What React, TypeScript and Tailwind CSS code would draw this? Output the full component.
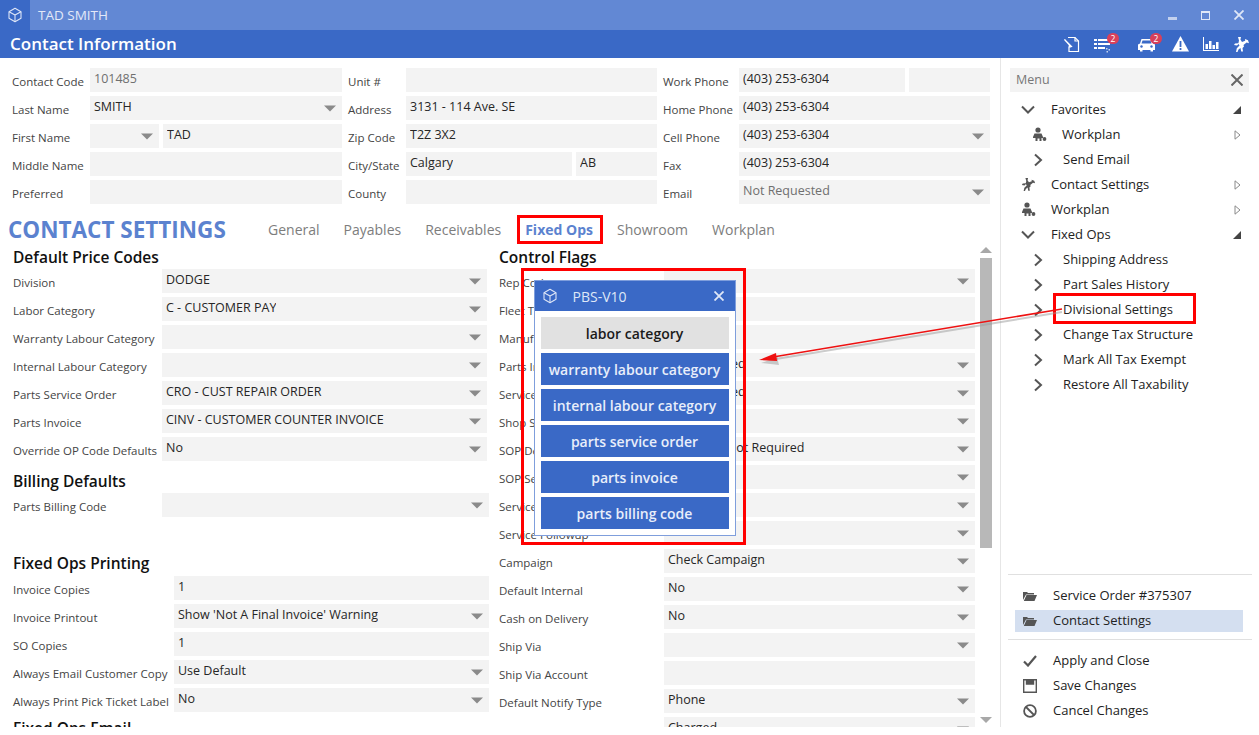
import React from "react";

const Caret = () => (
  <svg width="12" height="7" viewBox="0 0 12 7" className="shrink-0">
    <path d="M0 0.5h12L6 6.5z" fill="#8a8a8a" />
  </svg>
);

function Field({ value, select, muted, className = "" }: { value?: string; select?: boolean; muted?: boolean; className?: string }) {
  return (
    <div className={`h-6 bg-[#f3f3f3] flex items-start justify-between pl-[4px] pr-[6px] min-w-0 ${className}`}>
      <span className={`text-[12.5px] leading-[22px] whitespace-nowrap overflow-hidden ${muted ? "text-[#6f6f6f]" : "text-[#262626]"}`}>{value}</span>
      {select && <span className="mt-[9px]"><Caret /></span>}
    </div>
  );
}

function Row({ label, labelW, value, select, muted }: { label: string; labelW: string; value?: string; select?: boolean; muted?: boolean }) {
  return (
    <div className="flex items-center h-6">
      <div className={`${labelW} shrink-0 text-[11.5px] text-[#444444] whitespace-nowrap pt-[3px]`}>{label}</div>
      <Field value={value} select={select} muted={muted} className="flex-1" />
    </div>
  );
}

const Heading = ({ children, className = "" }: { children: React.ReactNode; className?: string }) => (
  <div className={`text-[15.5px] font-semibold text-[#111111] leading-6 h-6 ${className}`}>{children}</div>
);

const Cube = ({ size = 16, color = "#dfe7f7" }: { size?: number; color?: string }) => (
  <svg width={size} height={size} viewBox="0 0 24 24" fill="none" stroke={color} strokeWidth="1.6" strokeLinejoin="round">
    <path d="M12 2l9 5v10l-9 5-9-5V7z" />
    <path d="M3 7l9 5 9-5M12 12v10" />
  </svg>
);

const Badge = ({ className }: { className: string }) => (
  <span className={`absolute w-[12px] h-[11px] rounded-full bg-[#d8405a] text-white text-[8.5px] leading-[11px] text-center ${className}`}>2</span>
);

const ToolIcon = ({ color = "#ffffff", size = 17 }: { color?: string; size?: number }) => (
  <svg width={size} height={size} viewBox="0 0 17 17" fill={color}>
    <path d="M5 1h3l-.6 2.6L9 6l3.2-1.2L12 3l3 1.2 1 3-2.4-.6L10.500 9l.5 1.500L9.500 12l.5 3.500H8.200L7.500 12 5.500 13.500 4.500 16H3l.8-3.800L6.500 9.500 5.600 8 4 9.500 1 9l1-1.500 3.400-.3L6 4.500z" />
  </svg>
);

const PersonGear = () => (
  <svg width="15" height="15" viewBox="0 0 15 15" fill="#555555">
    <circle cx="6" cy="3" r="2.600" />
    <path d="M2.500 6.500h7l1.500 3.500v1H9.500V14h-2v-2.500H5.500V14h-2v-3H1v-1z" />
    <circle cx="12.500" cy="12" r="1.900" />
  </svg>
);

const ChevronRight = () => (
  <svg width="10" height="14" viewBox="0 0 10 14" fill="none" stroke="#555555" strokeWidth="2"><path d="M2 1.500L8 7l-6 5.500" /></svg>
);
const ChevronDown = () => (
  <svg width="14" height="10" viewBox="0 0 14 10" fill="none" stroke="#555555" strokeWidth="2"><path d="M1 1.500L7 7.500l6-6" /></svg>
);
const TriOpen = () => (
  <svg width="8" height="8" viewBox="0 0 8 8"><path d="M8 0v8H0z" fill="#444444" /></svg>
);
const TriClosed = () => (
  <svg width="7" height="10" viewBox="0 0 7 10" fill="none" stroke="#8a8a8a" strokeWidth="1"><path d="M1 .8L6 5 1 9.200z" /></svg>
);

function MenuItem({ level, icon, label, tri }: { level: 1 | 2; icon: React.ReactNode; label: string; tri?: "open" | "closed" }) {
  return (
    <div className="h-[25px] flex items-center text-[13px] text-[#222222]">
      <div className={`flex items-center justify-center shrink-0 ${level === 1 ? "ml-[19px] w-[16px] mr-[15px]" : "ml-[31px] w-[12px] mr-[19px]"}`}>{icon}</div>
      <span className="flex-1 whitespace-nowrap">{label}</span>
      <div className="w-[8px] mr-[18px] flex justify-center">
        {tri === "open" && <TriOpen />}
        {tri === "closed" && <TriClosed />}
      </div>
    </div>
  );
}

const Folder = () => (
  <svg width="14" height="10" viewBox="0 0 14 10" fill="#555555"><path d="M0 2V1h4l1 1h6v1.500H3L0 9zM3.500 4H14l-2.500 6H.8z" /></svg>
);

function ActionRow({ icon, label, active }: { icon: React.ReactNode; label: string; active?: boolean }) {
  return (
    <div className={`h-[25px] flex items-center text-[13px] text-[#222222] ${active ? "relative" : ""}`}>
      {active && <div className="absolute left-[14px] w-[228px] top-[1.500px] h-[22px] bg-[#d4dff0]" />}
      <div className="relative w-[52px] pl-[22px] shrink-0 flex">{icon}</div>
      <span className="relative whitespace-nowrap">{label}</span>
    </div>
  );
}

const leftA: [string, string, boolean][] = [
  ["Division", "DODGE", true],
  ["Labor Category", "C - CUSTOMER PAY", true],
  ["Warranty Labour Category", "", true],
  ["Internal Labour Category", "", true],
  ["Parts Service Order", "CRO - CUST REPAIR ORDER", true],
  ["Parts Invoice", "CINV - CUSTOMER COUNTER INVOICE", true],
  ["Override OP Code Defaults", "No", true],
];
const leftC: [string, string, boolean][] = [
  ["Invoice Copies", "1", false],
  ["Invoice Printout", "Show 'Not A Final Invoice' Warning", true],
  ["SO Copies", "1", false],
  ["Always Email Customer Copy", "Use Default", true],
  ["Always Print Pick Ticket Label", "No", true],
];
const right: [string, string, boolean][] = [
  ["Rep Code", "", true],
  ["Fleet Type", "", false],
  ["Manufacturer", "", false],
  ["Parts Invoice Signature", "Not Required", true],
  ["Service Invoice Signature", "Not Required", true],
  ["Shop Supplies", "", true],
  ["SOP Default", "Signature Not Required", true],
  ["SOP Service", "", true],
  ["Service Reminder", "", true],
  ["Service Followup", "Disabled", true],
  ["Campaign", "Check Campaign", true],
  ["Default Internal", "No", true],
  ["Cash on Delivery", "No", true],
  ["Ship Via", "", true],
  ["Ship Via Account", "", false],
  ["Default Notify Type", "Phone", true],
  ["Freight Charge", "Charged", true],
];

export default function App() {
  return (
    <div className="relative w-[1259px] h-[735px] overflow-hidden bg-white font-['Open_Sans','Noto_Sans',sans-serif]">
      {/* title bar */}
      <div className="h-[30px] bg-[#6288d4] flex items-center">
        <div className="w-[30px] h-[30px] bg-[#3a69c6] flex items-center justify-center"><Cube /></div>
        <div className="ml-[8px] flex-1 text-[13.5px] text-[#e2e9f8]">TAD SMITH</div>
        <div className="flex items-center gap-[24px] pr-[15px]">
          <div className="w-[9px] h-[3px] bg-[#c3d1ee] mt-[6px]" />
          <div className="w-[9px] h-[9px] border border-[#dfe7f7] border-t-[2px]" />
          <svg width="10" height="10" viewBox="0 0 10 10" stroke="#dfe7f7" strokeWidth="1.800"><path d="M.5.5l9 9M9.500.5l-9 9" /></svg>
        </div>
      </div>
      {/* header */}
      <div className="h-[28px] bg-[#3a69c6] flex items-center pl-[10px] pr-[9px]">
        <div className="flex-1 text-[17px] font-semibold text-white">Contact Information</div>
        <div className="flex items-center gap-[14px]">
          <svg width="17" height="17" viewBox="0 0 17 17" fill="none" stroke="#fff" strokeWidth="1.200"><path d="M5 1.500h7l3.500 3.500v10.500H6V12" /><path d="M12 1.500V5h3.500" /><path d="M1.500 3.500l7 7-2.500.8.500-2.300z" fill="#fff" /></svg>
          <div className="relative w-[17px] h-[17px] mr-[13px]">
            <svg width="17" height="17" viewBox="0 0 17 17" fill="#fff"><path d="M0 3h3v2H0zM4 3h12v2H4zM0 7h3v2H0zM4 7h12v2H4zM0 11h3v2H0zM4 11h7v2H4z" /><path d="M12 12h1.500v1.500H12zM14.500 13H16v1.500h-1.500zM12.500 15H14v1.500h-1.500z" fill="#c8d6f0" /></svg>
            <Badge className="left-[13px] -top-[3px]" />
          </div>
          <div className="relative w-[17px] h-[17px] mr-[3px]">
            <svg width="17" height="17" viewBox="0 0 17 17" fill="#fff"><path d="M3.500 3h10L15 7.500l2 1V14h-2v1.500h-2.500V14h-8v1.500H2V14H0V8.500l2-1zM4.500 4.500L3.500 7.500h10l-1-3z" fillRule="evenodd" /><circle cx="3.500" cy="10.500" r="1.200" fill="#3a69c6" /><circle cx="13.500" cy="10.500" r="1.200" fill="#3a69c6" /></svg>
            <Badge className="left-[12px] -top-[3px]" />
          </div>
          <svg width="17" height="16" viewBox="0 0 17 16"><path d="M8.500 0L17 15.500H0z" fill="#fff" /><path d="M7.600 5h1.800v6H7.600zM7.600 12h1.800v2H7.600z" fill="#3a69c6" /></svg>
          <svg width="16" height="16" viewBox="0 0 16 16" fill="#fff"><path d="M0 1h1v13h15v1H0zM2.500 8H5v5H2.500zM6 5h2.500v8H6zM9.500 9H12v4H9.500zM13 6h2.500v7H13z" /></svg>
          <ToolIcon />
        </div>
      </div>

      {/* body */}
      <div className="flex h-[669px]">
        <div className="w-[1000px] shrink-0 flex flex-col overflow-hidden">
          <div className="flex gap-[6px] pt-[10px] pl-[12px] pr-[10px]">
            <div className="w-[330px] flex flex-col gap-[4px]">
              <Row label="Contact Code" labelW="w-[78px]" value="101485" muted />
              <Row label="Last Name" labelW="w-[78px]" value="SMITH" select />
              <div className="flex items-center h-6">
                <div className="w-[78px] shrink-0 text-[11.5px] text-[#444444] pt-[3px]">First Name</div>
                <Field select className="w-[69px] shrink-0" />
                <Field value="TAD" className="flex-1 ml-[4px]" />
              </div>
              <Row label="Middle Name" labelW="w-[78px]" />
              <Row label="Preferred" labelW="w-[78px]" />
            </div>
            <div className="w-[309px] flex flex-col gap-[4px]">
              <Row label="Unit #" labelW="w-[58px]" />
              <Row label="Address" labelW="w-[58px]" value="3131 - 114 Ave. SE" />
              <Row label="Zip Code" labelW="w-[58px]" value="T2Z 3X2" />
              <div className="flex items-center h-6">
                <div className="w-[58px] shrink-0 text-[11.5px] text-[#444444] pt-[3px]">City/State</div>
                <Field value="Calgary" className="flex-1" />
                <Field value="AB" className="w-[81px] shrink-0 ml-[4px]" />
              </div>
              <Row label="County" labelW="w-[58px]" />
            </div>
            <div className="w-[327px] flex flex-col gap-[4px]">
              <div className="flex items-center h-6">
                <div className="w-[76px] shrink-0 text-[11.5px] text-[#444444] pt-[3px]">Work Phone</div>
                <Field value="(403) 253-6304" className="flex-1" />
                <Field className="w-[81px] shrink-0 ml-[4px]" />
              </div>
              <Row label="Home Phone" labelW="w-[76px]" value="(403) 253-6304" />
              <Row label="Cell Phone" labelW="w-[76px]" value="(403) 253-6304" select />
              <Row label="Fax" labelW="w-[76px]" value="(403) 253-6304" />
              <Row label="Email" labelW="w-[76px]" value="Not Requested" select muted />
            </div>
          </div>

          {/* tabs */}
          <div className="flex items-center h-[31px] mt-[10px] pl-[8px]">
            <div className="w-[260px] text-[22.5px] font-bold text-[#5b82cf] whitespace-nowrap">CONTACT SETTINGS</div>
            <div className="flex gap-[24px] text-[14px] text-[#7d7d7d]">
              <span>General</span>
              <span>Payables</span>
              <span>Receivables</span>
              <span className="relative font-bold text-[#5b82cf]">Fixed Ops
                <span className="absolute -left-[8px] -right-[10px] -top-[4px] -bottom-[4px] border-[3px] border-[#ff0000]" />
              </span>
              <span>Showroom</span>
              <span>Workplan</span>
            </div>
          </div>

          {/* settings */}
          <div className="flex flex-1 overflow-hidden pt-0">
            <div className="w-[489px] shrink-0 pl-[13px]">
              <Heading>Default Price Codes</Heading>
              <div className="flex flex-col gap-[4px] mr-[2px]">
                {leftA.map(([l, v, s]) => <Row key={l} label={l} labelW="w-[149px]" value={v} select={s} />)}
              </div>
              <Heading className="mt-[8px]">Billing Defaults</Heading>
              <Row label="Parts Billing Code" labelW="w-[149px] mr-[0px]" select />
              <Heading className="mt-[34px] mb-[1px]">Fixed Ops Printing</Heading>
              <div className="flex flex-col gap-[4px]">
                {leftC.map(([l, v, s]) => <Row key={l} label={l} labelW="w-[161px]" value={v} select={s} />)}
              </div>
              <Heading className="mt-[4px]">Fixed Ops Email</Heading>
            </div>
            <div className="w-[476px] shrink-0 ml-[10px] mr-[0px]">
              <Heading>Control Flags</Heading>
              <div className="flex flex-col gap-[4px]">
                {right.map(([l, v, s]) => <Row key={l} label={l} labelW="w-[165px]" value={v} select={s} />)}
              </div>
            </div>
            <div className="w-[12px] ml-[5px] flex flex-col items-center pt-[2px]">
              <svg width="12" height="6" viewBox="0 0 12 6"><path d="M6 0l6 6H0z" fill="#a8a8a8" /></svg>
              <div className="w-[12px] h-[290px] mt-[5px] bg-[#b8b8b8]" />
              <svg width="12" height="6" viewBox="0 0 12 6" className="mt-[169px]"><path d="M0 0h12L6 6z" fill="#a8a8a8" /></svg>
            </div>
          </div>
        </div>

        {/* menu */}
        <div className="flex-1 border-l-[1px] border-[#e6e6e6] flex flex-col relative">
          <div className="mt-[10px] mx-[9px] h-6 bg-[#f3f3f3] flex items-center justify-between pl-[6px] pr-[6px] mr-[10px]">
            <span className="text-[12.5px] text-[#777777]">Menu</span>
            <svg width="12" height="12" viewBox="0 0 12 12" stroke="#666666" strokeWidth="2"><path d="M.5.5l11 11M11.500.5l-11 11" /></svg>
          </div>
          <div className="mt-[5px]">
            <MenuItem level={1} icon={<ChevronDown />} label="Favorites" tri="open" />
            <div className="h-[25px] flex items-center text-[13px] text-[#222222]">
              <div className="ml-[31px] w-[16px] mr-[14px]"><PersonGear /></div>
              <span className="flex-1">Workplan</span>
              <div className="w-[8px] mr-[18px] flex justify-center"><TriClosed /></div>
            </div>
            <MenuItem level={2} icon={<ChevronRight />} label="Send Email" />
            <MenuItem level={1} icon={<ToolIcon color="#555555" size={15} />} label="Contact Settings" tri="closed" />
            <MenuItem level={1} icon={<PersonGear />} label="Workplan" tri="closed" />
            <MenuItem level={1} icon={<ChevronDown />} label="Fixed Ops" tri="open" />
            {["Shipping Address", "Part Sales History", "Divisional Settings", "Change Tax Structure", "Mark All Tax Exempt", "Restore All Taxability"].map((t) => (
              <MenuItem key={t} level={2} icon={<ChevronRight />} label={t} />
            ))}
          </div>
          <div className="flex-1" />
          <div className="border-t border-[#e0e0e0] mx-[7px] mb-[8px]" />
          <div className="-mx-0">
            <ActionRow icon={<Folder />} label="Service Order #375307" />
            <ActionRow icon={<Folder />} label="Contact Settings" active />
          </div>
          <div className="border-t border-[#e0e0e0] mx-[7px] mt-[6px] mb-[8px]" />
          <ActionRow icon={<svg width="14" height="12" viewBox="0 0 14 12" fill="none" stroke="#555555" strokeWidth="2.200"><path d="M1 6.500l4 4 8-9.500" /></svg>} label="Apply and Close" />
          <ActionRow icon={<svg width="14" height="14" viewBox="0 0 14 14" fill="none" stroke="#555555" strokeWidth="1.400"><path d="M.7.7h12.600v12.600H.7z" /><path d="M3.500 1v4h7V1" fill="#555555" /></svg>} label="Save Changes" />
          <ActionRow icon={<svg width="14" height="14" viewBox="0 0 14 14" fill="none" stroke="#555555" strokeWidth="1.800"><circle cx="7" cy="7" r="5.900" /><path d="M3 3l8 8" /></svg>} label="Cancel Changes" />
          <div className="h-[4px]" />
        </div>
      </div>

      {/* overlay: red frame and popup */}
      <div className="absolute left-[521px] top-[268px] w-[225px] h-[277px] border-[3px] border-[#ff0000] flex items-start justify-center pt-[9px] pl-[2px]">
        <div className="w-[202px] h-[256px] bg-white border border-[#7f9edc] flex flex-col">
          <div className="h-[30px] bg-[#3a69c6] flex items-center pl-[7px] pr-[11px] shrink-0">
            <Cube size={16} />
            <span className="ml-[15px] flex-1 text-[14px] text-[#dfe7f7]">PBS-V10</span>
            <svg width="10" height="10" viewBox="0 0 10 10" stroke="#dfe7f7" strokeWidth="1.800"><path d="M.5.500l9 9M9.500.500l-9 9" /></svg>
          </div>
          <div className="flex flex-col gap-[4px] pt-[6px] px-[6px]">
            <div className="h-[32px] bg-[#e1e1e1] flex items-center justify-center text-[14px] font-semibold text-[#1a1a1a]">labor category</div>
            {["warranty labour category", "internal labour category", "parts service order", "parts invoice", "parts billing code"].map((t) => (
              <div key={t} className="h-[32px] bg-[#3a69c6] flex items-center justify-center text-[14px] font-semibold text-[#e8eefa] whitespace-nowrap">{t}</div>
            ))}
          </div>
        </div>
      </div>

      {/* overlay: divisional settings frame */}
      <div className="absolute left-[1053px] top-[293px] w-[143px] h-[31px] border-[3px] border-[#ff0000]" />

      {/* overlay: arrow */}
      <svg className="absolute left-[750px] top-[300px]" width="320" height="70" viewBox="750 300 320 70">
        <path d="M776 359L1062 312" stroke="#999999" strokeOpacity="0.5" strokeWidth="2" fill="none" />
        <path d="M760 361l17-6 0 4 1 4z" fill="#999999" fillOpacity="0.5" transform="translate(1 2)" />
        <path d="M776 356.500L1062 309" stroke="#ee1111" strokeWidth="1.600" fill="none" />
        <path d="M759 360l17-7 1 8z" fill="#ee1111" />
      </svg>
    </div>
  );
}
